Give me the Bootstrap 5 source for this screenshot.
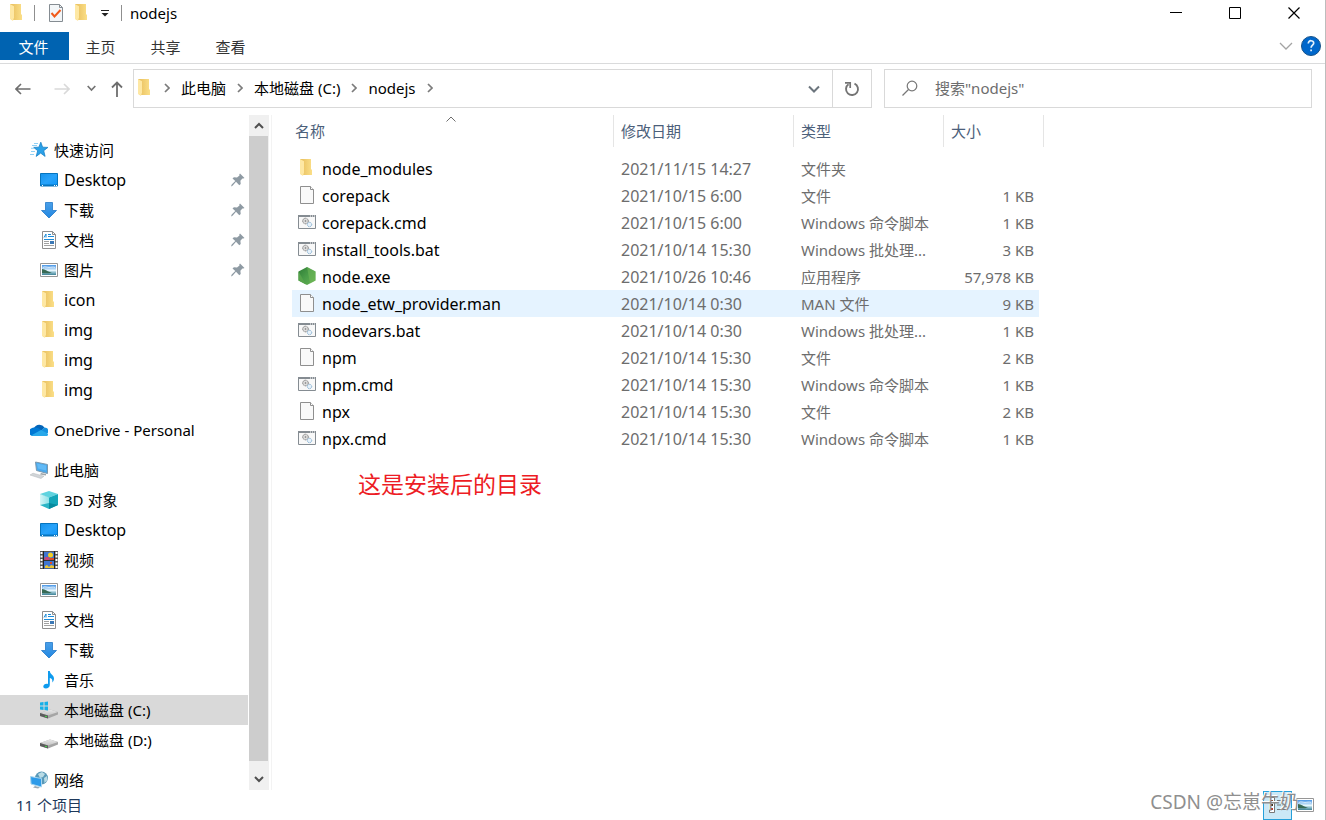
<!DOCTYPE html>
<html lang="zh-CN">
<head>
<meta charset="utf-8">
<meta name="viewport" content="width=device-width, initial-scale=1">
<title>nodejs</title>
<link href="https://cdn.jsdelivr.net/npm/bootstrap@5.3.0/dist/css/bootstrap.min.css" rel="stylesheet">
<style>
  body { font: 400 15px/20px "Noto Sans", "Noto Sans CJK SC", sans-serif; color: #000; background: #fff; border-right: 1px solid #bdbdbd; }
  svg { display: block; flex: none; }
  a, a:hover { color: inherit; text-decoration: none; }
  button { border: 0; padding: 0; background: none; color: inherit; }
  .ic { width: 18px; height: 18px; }
  .latin { font-size: 16px; }

  .title-bar { height: 28px; padding: 0 2px 2px 8px; }
  .quick { gap: 10px; margin: 0 12px 0 14px; }
  .vrule { width: 1px; height: 16px; background: #8f8f8f; }
  .win-btn { width: 59px; height: 28px; display: flex; align-items: center; justify-content: center; }

  .ribbon { height: 36px; padding-top: 4px; border-bottom: 1px solid #dadbdc; }
  .ribbon-tab { width: 65px; height: 28px; color: #333; padding: 2px 2px 0 0; }
  .ribbon-file { width: 69px; color: #fff; background: #0063b1; }

  .address-row { padding: 5px 13px 7px 13px; }
  .nav-group { width: 120px; padding-left: 2px; }
  .nav-fwd { margin-left: 23px; }
  .nav-recent { margin-left: 17px; }
  .nav-up { margin-left: 15px; }
  .box { height: 39px; border: 1px solid #d9d9d9; }
  .path-box { flex: 737 1 0; margin-right: 12px; }
  .search-box { flex: 409 1 0; padding: 0 0 2px 17px; gap: 15px; }
  .search-box input { border: 0; outline: 0; color: #6d6d6d; min-width: 0; }
  .search-box input::placeholder { color: #6d6d6d; opacity: 1; }
  .crumbs { gap: 11px; padding: 0 0 2px 3px; }
  .crumbs .ic { width: 16px; }
  .refresh { width: 39px; border-left: 1px solid #d9d9d9; }

  .tree { width: 249px; padding-top: 20px; }
  .tree-item { height: 30px; gap: 6px; padding: 0 3px 0 30px; margin-right: 1px; white-space: nowrap; }
  .tree-child { padding-left: 40px; }
  .tree-group { margin-bottom: 10px; }
  .tree-on { background: #d9d9d9; }
  .scroll { width: 20px; background: #f0f0f0; }
  .scroll button { height: 21px; display: flex; align-items: center; justify-content: center; }
  .scroll .down { height: 29px; padding-top: 8px; }
  .thumb { background: #cdcdcd; margin-right: 1px; }
  .files { border-left: 1px solid #f3f3f3; margin-left: 2px; padding-left: 20px; }

  .file-table { width: 752px; table-layout: fixed; border-collapse: separate; border-spacing: 0; color: #6d6d6d; }
  .file-table th { height: 32px; padding: 0 0 0 7px; font-weight: 400; color: #4c607a; border-right: 1px solid #e5e5e5; }
  .file-table th:first-child { padding-left: 3px; position: relative; }
  .file-table td { height: 27px; padding: 0 0 0 7px; white-space: nowrap; }
  .file-table td:first-child { padding-left: 6px; color: #000; font-size: 16px; }
  .file-table td:nth-child(2) { font-size: 16px; }
  .file-table td:last-child { text-align: right; padding: 0 5px 0 0; border-right: 5px solid transparent; background-clip: padding-box; }
  .file-table .row-gap td { height: 8px; padding: 0; }
  .row-on td { background-color: #e5f3ff; }
  .fname { gap: 6px; }
  .fname .ic { margin-bottom: 2px; }
  .c-name { width: 322px; }
  .c-date { width: 180px; }
  .c-type { width: 150px; }
  .c-size { width: 100px; }
  .sort { position: absolute; left: 154px; top: 1px; }
  .note { color: #ed1c24; font-size: 23px; line-height: 30px; margin: 17px 0 0 66px; }

  .status { height: 30px; padding: 0 11px 0 16px; color: #1e395b; }
  .view-on { width: 29px; height: 29px; border: 1px solid #26a0da; background: #cbe8f6; display: flex; align-items: center; justify-content: center; }
  .watermark { position: absolute; right: 26px; bottom: 4px; font-size: 19px; line-height: 28px; color: #8f8f8f; text-shadow: -1px -1px 0 #fff; white-space: nowrap; pointer-events: none; }
</style>
</head>
<body class="d-flex flex-column vh-100 overflow-hidden position-relative">

<svg width="0" height="0" class="position-absolute" aria-hidden="true">
  <defs>
    <linearGradient id="gBlue" x1="0" y1="0" x2="1" y2="1"><stop offset="0" stop-color="#1593ec"/><stop offset=".5" stop-color="#29a3fa"/><stop offset="1" stop-color="#0d96fa"/></linearGradient>
    <linearGradient id="gArrow" x1="0" y1="0" x2="0" y2="1"><stop offset="0" stop-color="#4ba0e8"/><stop offset="1" stop-color="#2187e2"/></linearGradient>
    <linearGradient id="gSky" x1="0" y1="0" x2="0" y2="1"><stop offset="0" stop-color="#4795e6"/><stop offset=".55" stop-color="#e6f6fd"/><stop offset=".7" stop-color="#9cc6d4"/><stop offset="1" stop-color="#3e8296"/></linearGradient>
    <linearGradient id="gFold" x1="0" y1="0" x2="1" y2="0"><stop offset="0" stop-color="#e7bd5b"/><stop offset="1" stop-color="#fbdf88"/></linearGradient>
    <linearGradient id="gDisk" x1="0" y1="0" x2="0" y2="1"><stop offset="0" stop-color="#e8e8e8"/><stop offset="1" stop-color="#c4c4c4"/></linearGradient>
    <linearGradient id="gNode" x1="0" y1="0" x2="1" y2="1"><stop offset="0" stop-color="#2f7d36"/><stop offset=".5" stop-color="#4a9d49"/><stop offset="1" stop-color="#69b352"/></linearGradient>
    <linearGradient id="gCube" x1="0" y1="0" x2="1" y2="0"><stop offset="0" stop-color="#d6f6f7"/><stop offset="1" stop-color="#8fe1e8"/></linearGradient>
  </defs>
  <symbol id="folder" viewBox="0 0 18 18"><path d="M2 0h11v10l1 1v5H3z" fill="url(#gFold)"/><path d="M2 0l4 2.300v11l-1 3.700-3-2z" fill="#fee8a4"/></symbol>
  <symbol id="star" viewBox="0 0 18 18"><path d="M10.800 1.200l1.800 5 5.300.2-4.200 3.300 1.400 5.700-4.400-3.300-4.500 3.300 1.500-5.700-4-3.300 5.200-.2z" fill="#2ba1e8" stroke="#1680c7" stroke-width=".8"/><path d="M4 2.500h4M2 4.500h5M1 7.300h3M1 10.500h4M0 13.500h4" stroke="#8fd0f5"/></symbol>
  <symbol id="desktop" viewBox="0 0 18 18"><path d="M.5 2.500h17v12.500H.5z" fill="url(#gBlue)" stroke="#0675bf"/><path d="M1 13.500h16v1.500H1z" fill="#0675bf"/><path d="M2 14.500h1M14 14.500h1M16 14.500h1" stroke="#fff"/></symbol>
  <symbol id="download" viewBox="0 0 18 18"><path d="M5.500 1.500h7v8h4L9 17 1.500 9.500h4z" fill="url(#gArrow)" stroke="#2278c9" stroke-width=".8"/></symbol>
  <symbol id="doc" viewBox="0 0 18 18"><path d="M2.500.5h10l3 3v14h-13z" fill="#fff" stroke="#8f8f8f"/><path d="M12.500.5v3h3" fill="none" stroke="#8f8f8f"/><path d="M4 6.500L6 3v3.500M8 3.500h3M8 5.500h6M4 8.500h10" stroke="#1c8bd8" fill="none"/><path d="M4 10.500h5M4 12.500h5M4 14.500h10" stroke="#a2a2a2"/><path d="M10 10h4v3h-4z" fill="#3b78b5"/></symbol>
  <symbol id="picture" viewBox="0 0 18 18"><path d="M.5 2.500h17v13H.5z" fill="#fff" stroke="#969696"/><path d="M2 4h14v10H2z" fill="url(#gSky)"/><path d="M2 8c3 0 6 3 10 3.500-3 1-7 1-10 .5z" fill="#386a55"/><path d="M3 6.500c2-1.500 4 0 6 0s4-1 6 0" stroke="#fff" fill="none" opacity=".6"/></symbol>
  <symbol id="pin" viewBox="0 0 14 14"><path d="M9 .5L13.500 5l-1.200.600-.900-.200-2 2.300.3 3.200-1.400 1.300L5 8.800 1.500 12.700 0 13.500l.700-1.900L4.300 8 1.500 5.500l1.400-1.300 3.100.3L8.500 2.500 8.300 1.500z" fill="#8e9aa3"/></symbol>
  <symbol id="cloud" viewBox="0 0 20 18"><path d="M5 7a6 6 0 0 1 10.500-.500L11 11z" fill="#0364b8"/><path d="M5 6.500c-7 1-6 8-1.500 8.500L13 9.500 9 7C7.500 6.300 6 6.300 5 6.500z" fill="#0078d4"/><path d="M15.500 6.500c3 .2 4.500 2.300 4.500 4.500L17 13l-5-3.500z" fill="#1490df"/><path d="M2 14.500L12 9l7.700 4c-.5 1.500-1.700 2-3.200 2H4.500c-1 0-2-.200-2.500-.500z" fill="#28a8ea"/></symbol>
  <symbol id="pc" viewBox="0 0 18 18"><path d="M5.500 1l12 2.500v9L6.500 9.500z" fill="#4aa9ec" stroke="#7c98ad"/><path d="M7 2.500l9 2v5L8 7.500z" fill="#62baf6"/><path d="M11 12l5 1v1.500l-6-1z" fill="#9fa6aa"/><path d="M0 14l3-1.800 11 3-3 2.300z" fill="#d1d5d8" stroke="#b2b7bb" stroke-width=".5"/></symbol>
  <symbol id="cube" viewBox="0 0 18 18"><path d="M0 3l9-3 9 3-9 3.500z" fill="#5fd3df"/><path d="M0 3l9 3.500V18l-9-4z" fill="#2bb5c6"/><path d="M18 3L9 6.500V18l9-4z" fill="#14a6b9"/><path d="M9 12l9 2-9 4z" fill="#078a9e"/><path d="M0 3l9 3.500V12l-9 2z" fill="url(#gCube)"/></symbol>
  <symbol id="video" viewBox="0 0 18 18"><path d="M0 0h18v18H0z" fill="#555"/><path d="M1.500 1v17M16.500 1v17" stroke="#fff" stroke-width="2" stroke-dasharray="2 1.500"/><path d="M4 1h10v7.500H4zM4 10h10v7.500H4z" fill="#3f75d1"/><path d="M3.500 0v18M14.500 0v18M3.500 9.200h11" stroke="#222"/><circle cx="10.500" cy="4" r="2.500" fill="#f3cf22"/><path d="M5 6h4l1 3H4z" fill="#c54876"/><path d="M10 7h4v2h-4zM10 11h2v2h-2z" fill="#e04824"/><path d="M5 17v-2l2-1 2 2 2-2 3 1v2z" fill="#edc72f"/></symbol>
  <symbol id="music" viewBox="0 0 18 18"><path d="M8 0h1.800c.4 3.500 4.200 4 4.200 7.500 0 1.700-.7 3-1.700 4 .5-2.500-.3-4-2.500-4.600V14c0 2.200-2 3.600-4 3.600-1.500 0-2.500-.8-2.500-2 0-1.700 2.200-3.300 4.700-2.600z" fill="#0f9bee"/></symbol>
  <symbol id="disk" viewBox="0 0 18 18"><path d="M0 12l10-3.500 8 2.500v2.500L8 17.500 0 15z" fill="#a5a5a5"/><path d="M0 12l10-3.500 8 2.500-10 3.500z" fill="url(#gDisk)"/><path d="M0 12l8 2.500v3L0 15z" fill="#5c5c5c"/><path d="M5 14.700l2 .6v1l-2-.6z" fill="#45e04b"/></symbol>
  <symbol id="diskwin" viewBox="0 0 18 18"><use href="#disk"/><path d="M0 1.500l3.500-.5v3.500H0zM4.500 1L8 .5v4H4.500zM0 5.500h3.500V9L0 8.500zM4.500 5.500H8v4L4.500 9z" fill="#16b0e8"/></symbol>
  <symbol id="network" viewBox="0 0 18 18"><circle cx="11.500" cy="7" r="6.500" fill="#5999b8"/><path d="M8 3l4-2 3 2-2 3-3 1zM14 7l3-2 .5 4-3 3z" fill="#b9dbe5"/><path d="M.5 5.500l11 2V16l-10.500-3z" fill="#2d9be9" stroke="#a7d5ef"/><path d="M5 15l5 1.500-2 1-5-1z" fill="#9ba9b2"/></symbol>
  <symbol id="file" viewBox="0 0 18 18"><path d="M2.500.5h10l3 3v14h-13z" fill="#f9f9f9" stroke="#8f8f8f"/><path d="M12.500.5v3h3" fill="#fff" stroke="#8f8f8f"/></symbol>
  <symbol id="script" viewBox="0 0 18 18"><path d="M.5 2.500h17v13H.5z" fill="#f8f8f8" stroke="#858c92"/><path d="M0 3h18" stroke="#858c92" stroke-width="2"/><path d="M12 3h1M14 3h1M16 3h1" stroke="#fff"/><circle cx="7.500" cy="8" r="2.800" fill="#ddd" stroke="#777" stroke-dasharray="1.200 .6"/><circle cx="7.500" cy="8" r=".8" fill="#777"/><circle cx="11.500" cy="11.500" r="2.200" fill="#e6f1fa" stroke="#83aed0" stroke-dasharray="1.200 .5"/></symbol>
  <symbol id="node" viewBox="0 0 18 18"><path d="M9 0l8.500 4.500v9L9 18 .5 13.500v-9z" fill="url(#gNode)"/><path d="M.5 4.500L8 17.500l-7.500-4z" fill="#57a34b"/><path d="M9 0l8.500 4.500v9L12 16.500z" fill="#76bb5a" opacity=".5"/></symbol>
  <symbol id="chev" viewBox="0 0 6 10"><path d="M1 1l4 4-4 4" fill="none" stroke="#7b7b7b" stroke-width="1.700"/></symbol>
  <symbol id="vee" viewBox="0 0 12 8"><path d="M1 1.500l5 5 5-5" fill="none" stroke="currentColor" stroke-width="2"/></symbol>
</svg>

<header>
  <div class="title-bar d-flex align-items-center">
    <svg class="ic"><use href="#folder"/></svg>
    <span class="vrule ms-2"></span>
    <div class="quick d-flex align-items-center">
      <button aria-label="属性"><svg width="14" height="18" viewBox="0 0 14 18"><path d="M.5.500h10l3 3v14H.5z" fill="#f3f6f8" stroke="#858c92"/><path d="M10.500.5v3h3" fill="none" stroke="#858c92"/><path d="M2.500 9l3 3.500L11.500 6" fill="none" stroke="#f05a1a" stroke-width="2"/></svg></button>
      <button aria-label="新建文件夹"><svg class="ic"><use href="#folder"/></svg></button>
      <button aria-label="自定义快速访问工具栏"><svg width="8" height="7" viewBox="0 0 8 7"><path d="M0 .5h8" stroke="#222"/><path d="M.5 3h7L4 6.500z" fill="#222"/></svg></button>
    </div>
    <span class="vrule me-2"></span>
    <span>nodejs</span>
    <div class="d-flex ms-auto">
      <button class="win-btn" aria-label="最小化"><svg width="12" height="12"><path d="M0 5.500h12" stroke="#000"/></svg></button>
      <button class="win-btn" aria-label="最大化"><svg width="12" height="12"><path d="M.5.500h11v11H.500z" fill="none" stroke="#000"/></svg></button>
      <button class="win-btn" aria-label="关闭"><svg width="12" height="12"><path d="M.5.500l11 11M11.500.500l-11 11" stroke="#000" stroke-width="1.200"/></svg></button>
    </div>
  </div>
  <div class="ribbon d-flex">
    <button class="ribbon-tab ribbon-file">文件</button>
    <button class="ribbon-tab">主页</button>
    <button class="ribbon-tab">共享</button>
    <button class="ribbon-tab">查看</button>
    <div class="d-flex align-items-center ms-auto me-1 pb-1 gap-2">
      <button aria-label="展开功能区"><svg width="14" height="8" viewBox="0 0 14 8"><path d="M1 1l6 6 6-6" fill="none" stroke="#a3a3a3" stroke-width="1.300"/></svg></button>
      <button aria-label="帮助"><svg width="20" height="20"><circle cx="10" cy="10" r="9.500" fill="#0067cb" stroke="#17538b"/><path d="M7.300 7.500c0-4 5.600-3.300 5.400-.3-.1 1.900-2.600 2-2.600 4.500M10.100 13.500v1.800" fill="none" stroke="#e4f1fb" stroke-width="1.700"/></svg></button>
    </div>
  </div>
  <div class="address-row d-flex align-items-center">
    <div class="nav-group d-flex align-items-center">
      <button aria-label="后退"><svg width="16" height="12"><path d="M15.500 6H1M6 1L1 6l5 5" fill="none" stroke="#6e6e6e" stroke-width="1.600"/></svg></button>
      <button class="nav-fwd" aria-label="前进"><svg width="16" height="12"><path d="M.5 6H15M10 1l5 5-5 5" fill="none" stroke="#d9d9d9" stroke-width="1.600"/></svg></button>
      <button class="nav-recent" aria-label="最近位置"><svg width="9" height="7"><path d="M.7 1l3.800 4 3.800-4" fill="none" stroke="#747474" stroke-width="1.700"/></svg></button>
      <button class="nav-up" aria-label="上移"><svg width="12" height="16"><path d="M6 16V1.500M1 6.500l5-5 5 5" fill="none" stroke="#6e6e6e" stroke-width="1.800"/></svg></button>
    </div>
    <div class="box path-box d-flex">
      <nav class="crumbs d-flex align-items-center flex-grow-1" aria-label="路径">
        <svg class="ic" viewBox="1 0 16 18"><use href="#folder" width="18" height="18"/></svg>
        <svg width="6" height="10"><use href="#chev"/></svg>
        <a href="#">此电脑</a>
        <svg width="6" height="10"><use href="#chev"/></svg>
        <a href="#">本地磁盘 (C:)</a>
        <svg width="6" height="10"><use href="#chev"/></svg>
        <a href="#">nodejs</a>
        <svg width="6" height="10"><use href="#chev"/></svg>
      </nav>
      <button class="px-2 me-1 text-secondary" aria-label="以前的位置"><svg width="12" height="8"><use href="#vee"/></svg></button>
      <button class="refresh d-flex align-items-center justify-content-center" aria-label="刷新"><svg width="16" height="16"><path d="M10.500 2.600a6 6 0 1 1-6 .6" fill="none" stroke="#747474" stroke-width="1.900"/><path d="M1 1.800h5.200V7" fill="none" stroke="#747474" stroke-width="1.700"/></svg></button>
    </div>
    <div class="box search-box d-flex align-items-center">
      <svg width="16" height="16"><circle cx="10" cy="6" r="4.800" fill="none" stroke="#777" stroke-width="1.200"/><path d="M6.500 9.500L.500 15.500" stroke="#777" stroke-width="1.300"/></svg>
      <input class="flex-grow-1" type="text" aria-label="搜索" placeholder='搜索"nodejs"'>
    </div>
  </div>
</header>

<main class="d-flex flex-grow-1 overflow-hidden">
  <nav class="tree flex-shrink-0 overflow-hidden" aria-label="导航窗格">
    <div class="tree-group">
      <a href="#" class="tree-item d-flex align-items-center"><svg class="ic"><use href="#star"/></svg>快速访问</a>
      <a href="#" class="tree-item tree-child latin d-flex align-items-center"><svg class="ic"><use href="#desktop"/></svg>Desktop<svg class="ms-auto" width="14" height="14"><use href="#pin"/></svg></a>
      <a href="#" class="tree-item tree-child d-flex align-items-center"><svg class="ic"><use href="#download"/></svg>下载<svg class="ms-auto" width="14" height="14"><use href="#pin"/></svg></a>
      <a href="#" class="tree-item tree-child d-flex align-items-center"><svg class="ic"><use href="#doc"/></svg>文档<svg class="ms-auto" width="14" height="14"><use href="#pin"/></svg></a>
      <a href="#" class="tree-item tree-child d-flex align-items-center"><svg class="ic"><use href="#picture"/></svg>图片<svg class="ms-auto" width="14" height="14"><use href="#pin"/></svg></a>
      <a href="#" class="tree-item tree-child latin d-flex align-items-center"><svg class="ic"><use href="#folder"/></svg>icon</a>
      <a href="#" class="tree-item tree-child latin d-flex align-items-center"><svg class="ic"><use href="#folder"/></svg>img</a>
      <a href="#" class="tree-item tree-child latin d-flex align-items-center"><svg class="ic"><use href="#folder"/></svg>img</a>
      <a href="#" class="tree-item tree-child latin d-flex align-items-center"><svg class="ic"><use href="#folder"/></svg>img</a>
    </div>
    <div class="tree-group">
      <a href="#" class="tree-item d-flex align-items-center"><svg class="ic" viewBox="1 0 18 18"><use href="#cloud" width="20" height="18"/></svg>OneDrive - Personal</a>
    </div>
    <div class="tree-group">
      <a href="#" class="tree-item d-flex align-items-center"><svg class="ic"><use href="#pc"/></svg>此电脑</a>
      <a href="#" class="tree-item tree-child d-flex align-items-center"><svg class="ic"><use href="#cube"/></svg>3D 对象</a>
      <a href="#" class="tree-item tree-child latin d-flex align-items-center"><svg class="ic"><use href="#desktop"/></svg>Desktop</a>
      <a href="#" class="tree-item tree-child d-flex align-items-center"><svg class="ic"><use href="#video"/></svg>视频</a>
      <a href="#" class="tree-item tree-child d-flex align-items-center"><svg class="ic"><use href="#picture"/></svg>图片</a>
      <a href="#" class="tree-item tree-child d-flex align-items-center"><svg class="ic"><use href="#doc"/></svg>文档</a>
      <a href="#" class="tree-item tree-child d-flex align-items-center"><svg class="ic"><use href="#download"/></svg>下载</a>
      <a href="#" class="tree-item tree-child d-flex align-items-center"><svg class="ic"><use href="#music"/></svg>音乐</a>
      <a href="#" class="tree-item tree-child tree-on d-flex align-items-center"><svg class="ic"><use href="#diskwin"/></svg>本地磁盘 (C:)</a>
      <a href="#" class="tree-item tree-child d-flex align-items-center"><svg class="ic"><use href="#disk"/></svg>本地磁盘 (D:)</a>
    </div>
    <a href="#" class="tree-item d-flex align-items-center"><svg class="ic"><use href="#network"/></svg>网络</a>
  </nav>
  <div class="scroll d-flex flex-column flex-shrink-0">
    <button aria-label="向上滚动"><svg width="10" height="7"><path d="M1 6l4-4 4 4" fill="none" stroke="#505050" stroke-width="2"/></svg></button>
    <div class="thumb flex-grow-1"></div>
    <button class="down" aria-label="向下滚动"><svg width="10" height="7"><path d="M1 1l4 4 4-4" fill="none" stroke="#505050" stroke-width="2"/></svg></button>
  </div>
  <section class="files flex-grow-1 overflow-hidden">
    <table class="file-table">
      <colgroup><col class="c-name"><col class="c-date"><col class="c-type"><col class="c-size"></colgroup>
      <thead>
        <tr><th>名称<svg class="sort" width="10" height="6"><path d="M.5 5.500L5 1l4.500 4.500" fill="none" stroke="#6d6d6d"/></svg></th><th>修改日期</th><th>类型</th><th>大小</th></tr>
      </thead>
      <tbody>
        <tr class="row-gap"><td colspan="4"></td></tr>
        <tr><td><div class="fname d-flex align-items-center"><svg class="ic"><use href="#folder"/></svg>node_modules</div></td><td>2021/11/15 14:27</td><td>文件夹</td><td></td></tr>
        <tr><td><div class="fname d-flex align-items-center"><svg class="ic"><use href="#file"/></svg>corepack</div></td><td>2021/10/15 6:00</td><td>文件</td><td>1 KB</td></tr>
        <tr><td><div class="fname d-flex align-items-center"><svg class="ic"><use href="#script"/></svg>corepack.cmd</div></td><td>2021/10/15 6:00</td><td>Windows 命令脚本</td><td>1 KB</td></tr>
        <tr><td><div class="fname d-flex align-items-center"><svg class="ic"><use href="#script"/></svg>install_tools.bat</div></td><td>2021/10/14 15:30</td><td>Windows 批处理...</td><td>3 KB</td></tr>
        <tr><td><div class="fname d-flex align-items-center"><svg class="ic"><use href="#node"/></svg>node.exe</div></td><td>2021/10/26 10:46</td><td>应用程序</td><td>57,978 KB</td></tr>
        <tr class="row-on"><td><div class="fname d-flex align-items-center"><svg class="ic"><use href="#file"/></svg>node_etw_provider.man</div></td><td>2021/10/14 0:30</td><td>MAN 文件</td><td>9 KB</td></tr>
        <tr><td><div class="fname d-flex align-items-center"><svg class="ic"><use href="#script"/></svg>nodevars.bat</div></td><td>2021/10/14 0:30</td><td>Windows 批处理...</td><td>1 KB</td></tr>
        <tr><td><div class="fname d-flex align-items-center"><svg class="ic"><use href="#file"/></svg>npm</div></td><td>2021/10/14 15:30</td><td>文件</td><td>2 KB</td></tr>
        <tr><td><div class="fname d-flex align-items-center"><svg class="ic"><use href="#script"/></svg>npm.cmd</div></td><td>2021/10/14 15:30</td><td>Windows 命令脚本</td><td>1 KB</td></tr>
        <tr><td><div class="fname d-flex align-items-center"><svg class="ic"><use href="#file"/></svg>npx</div></td><td>2021/10/14 15:30</td><td>文件</td><td>2 KB</td></tr>
        <tr><td><div class="fname d-flex align-items-center"><svg class="ic"><use href="#script"/></svg>npx.cmd</div></td><td>2021/10/14 15:30</td><td>Windows 命令脚本</td><td>1 KB</td></tr>
      </tbody>
    </table>
    <p class="note">这是安装后的目录</p>
  </section>
</main>

<footer class="status d-flex align-items-center flex-shrink-0">
  <span>11 个项目</span>
  <div class="d-flex align-items-center ms-auto gap-1">
    <button class="view-on" aria-label="详细信息"><svg width="18" height="16"><path d="M.5.500h5v15h-5zM8 3.500h4M13 3.500h4M8 8h4M13 8h4M8 12.500h4M13 12.500h4" fill="#fff" stroke="#777"/><path d="M2 3h2v2H2z" fill="#8a4a3a"/><path d="M2 7h2v2H2z" fill="#333"/><path d="M2 11h2v2H2z" fill="#c33"/></svg></button>
    <button aria-label="大缩略图"><svg class="ic"><use href="#picture"/></svg></button>
  </div>
</footer>
<div class="watermark">CSDN @忘崽牛奶</div>

<script src="https://cdn.jsdelivr.net/npm/bootstrap@5.3.0/dist/js/bootstrap.bundle.min.js"></script>
</body>
</html>
